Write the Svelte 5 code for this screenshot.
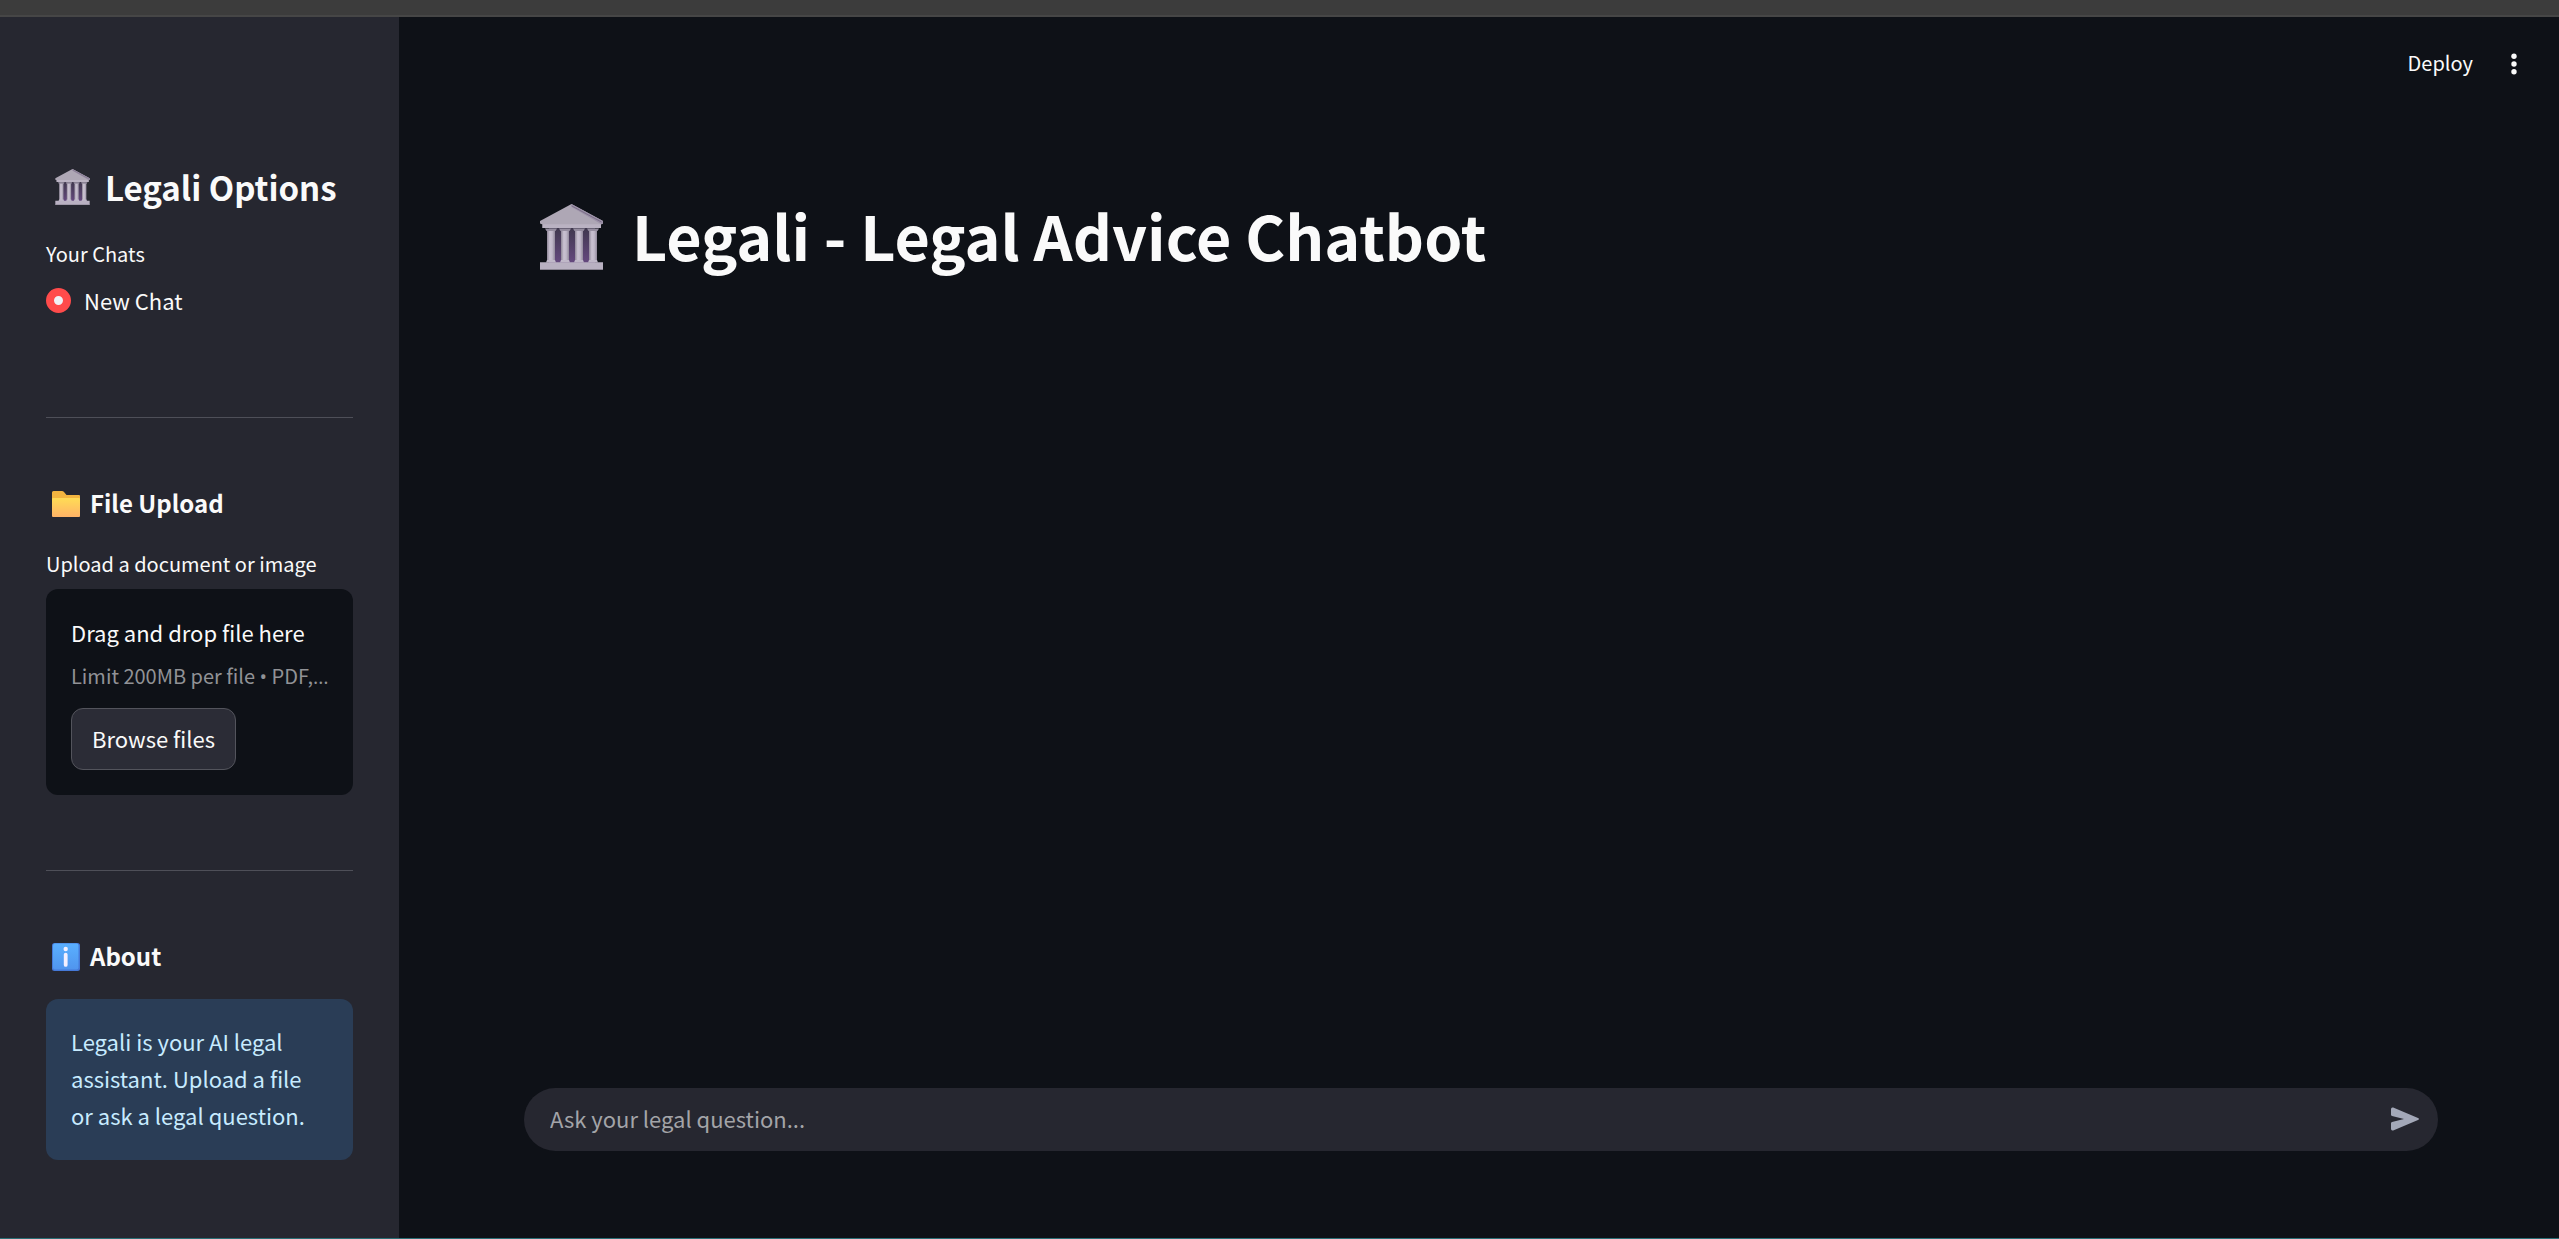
<script>
  let question = $state('');
  let chat = $state('new');
</script>

{#snippet temple(size)}
  <svg class="temple {size}" viewBox="0 0 63 66" aria-hidden="true">
    <defs>
      <linearGradient id="pillar-{size}">
        <stop offset="0" stop-color="#8f8798" />
        <stop offset=".35" stop-color="#c9c1d1" />
        <stop offset=".65" stop-color="#c0b8c9" />
        <stop offset="1" stop-color="#91899b" />
      </linearGradient>
      <linearGradient id="hall-{size}" x1="0" y1="0" x2="0" y2="1">
        <stop offset="0" stop-color="#40384e" />
        <stop offset="1" stop-color="#65497f" />
      </linearGradient>
    </defs>
    <rect x="9" y="24" width="46" height="35" fill="url(#hall-{size})" />
    {#each [7, 21, 35, 49] as x}
      <rect {x} y="25" width="8" height="33" fill="url(#pillar-{size})" />
      <path d="M{x - 2} 24.500h12l-1.500 2.500h-9z" fill="#958d9f" />
      <path d="M{x - 1} 58.500l1-2.500h8l1 2.500z" fill="#c0b8c9" />
    {/each}
    <path d="M31.500 0L63 17v2.500l-2 1V24H2.500v-3.500L0 19.500V17z" fill="#aea7b5" />
    <path d="M31.500 0L63 17v2.500l-2 .5L31.500 3z" fill="#9c91a8" />
    <path d="M31.500 1.800L61.500 18" stroke="#7b6f88" stroke-width="1" fill="none" />
    <path d="M2.500 20.200H61V24H2.500z" fill="#bab2c2" />
    <path d="M0 58.300h63V66H0z" fill="#b9b1c2" />
    <path d="M0 65h63v1H0z" fill="#8a8492" />
  </svg>
{/snippet}

<div class="page">
  <div class="window-edge"></div>
  <div class="layout">
    <aside>
      <h2>{@render temple('small')}Legali Options</h2>

      <fieldset>
        <legend>Your Chats</legend>
        <label class="choice">
          <input type="radio" name="chat" value="new" bind:group={chat} />
          <span>New Chat</span>
        </label>
      </fieldset>

      <hr />

      <h3>
        <svg class="mark" viewBox="0 0 28 28" aria-hidden="true">
          <defs>
            <linearGradient id="folder" x1="0" y1="0" x2="0" y2="1">
              <stop offset="0" stop-color="#ffdc55" />
              <stop offset="1" stop-color="#ffb367" />
            </linearGradient>
          </defs>
          <path d="M0 2.500Q0 1 1.500 1H10q1 0 1.800.800L14.500 5H27q1 0 1 1v6H0z" fill="#f3b540" />
          <path d="M1 8h26q1 0 1 1v17q0 1-1 1H1q-1 0-1-1V9q0-1 1-1z" fill="url(#folder)" />
        </svg>
        File Upload
      </h3>

      <label class="caption" for="picker">Upload a document or image</label>
      <section class="dropzone">
        <p class="prompt">Drag and drop file here</p>
        <p class="limit">Limit 200MB per file <span class="mid">•</span> PDF,<span class="mid">…</span></p>
        <button id="picker" class="browse" type="button">Browse files</button>
      </section>

      <hr />

      <h3>
        <svg class="mark" viewBox="0 0 28 28" aria-hidden="true">
          <defs>
            <linearGradient id="info" x1="0" y1="0" x2="0" y2="1">
              <stop offset="0" stop-color="#5ab0ff" />
              <stop offset="1" stop-color="#5095ee" />
            </linearGradient>
          </defs>
          <rect width="28" height="28" rx="2.500" fill="#4579d8" />
          <rect x="1" y=".5" width="25.500" height="26" rx="2" fill="url(#info)" />
          <circle cx="13.700" cy="6" r="2.200" fill="#f4f0ff" />
          <rect x="11.800" y="9.800" width="3.800" height="14" rx="1.900" fill="#f4f0ff" />
        </svg>
        About
      </h3>
      <p class="note">Legali is your AI legal assistant. Upload a file or ask a legal question.</p>
    </aside>

    <main>
      <header>
        <button class="deploy" type="button">Deploy</button>
        <button class="menu" type="button" aria-label="Main menu">
          <svg viewBox="0 0 24 24" aria-hidden="true">
            <circle cx="12" cy="4.200" r="2.700" />
            <circle cx="12" cy="12" r="2.700" />
            <circle cx="12" cy="19.800" r="2.700" />
          </svg>
        </button>
      </header>

      <h1>{@render temple('large')}Legali - Legal Advice Chatbot</h1>

      <form class="ask" onsubmit={(e) => e.preventDefault()}>
        <input
          type="text"
          aria-label="Ask your legal question"
          placeholder="Ask your legal question..."
          bind:value={question}
        />
        <button type="submit" aria-label="Send message">
          <svg viewBox="0 0 28 24" aria-hidden="true">
            <path d="M0 2.200Q0 0 2.200.6L27 10.900Q29 12 27 13.100L2.200 23.400Q0 24 0 21.800V16.200Q0 15.200 1 15L13 12L1 9Q0 8.800 0 7.800z" />
          </svg>
        </button>
      </form>
    </main>
  </div>
</div>

<style>
  :global(body) {
    margin: 0;
    background: #0e1117;
  }

  .page {
    display: flex;
    flex-direction: column;
    min-height: 100vh;
    box-sizing: border-box;
    border-bottom: 1px solid #2a6f76;
    color: #fafafa;
    font-family: 'Noto Sans CJK SC', 'Source Sans Pro', sans-serif;
    font-size: 22px;
    line-height: 37px;
  }

  .window-edge {
    height: 15px;
    background: #3c3c3c;
    border-bottom: 2px solid #464646;
  }

  .layout {
    display: flex;
    flex: 1;
  }

  aside {
    flex: none;
    width: 399px;
    box-sizing: border-box;
    padding: 146px 46px 0;
    background: #262730;
  }

  h1,
  h2,
  h3,
  p {
    margin: 0;
  }

  h1,
  h2,
  h3 {
    display: flex;
    align-items: center;
    font-weight: 700;
    white-space: nowrap;
  }

  h2 {
    gap: 15px;
    padding-left: 9px;
    font-size: 33px;
    line-height: 48px;
  }

  h3 {
    gap: 10px;
    padding: 0 0 2px 6px;
    font-size: 24px;
    line-height: 34px;
  }

  .temple {
    flex: none;
  }

  .small {
    width: 35px;
    height: 36px;
  }

  .large {
    width: 63px;
    height: 66px;
    margin-top: 4px;
  }

  .mark {
    flex: none;
    width: 28px;
    height: 28px;
    margin-top: 2px;
  }

  fieldset {
    margin: 26px 0 0;
    padding: 0;
    border: 0;
  }

  legend,
  .caption {
    display: block;
    padding: 0;
    font-size: 20px;
    line-height: 34px;
  }

  .choice {
    display: flex;
    align-items: center;
    gap: 13px;
    margin-top: 11px;
  }

  .choice input {
    appearance: none;
    width: 25px;
    height: 25px;
    margin: 0;
    border: 8px solid #ff4b4b;
    border-radius: 50%;
    background: #f0f2f6;
  }

  hr {
    height: 1px;
    margin: 98px 0 68px;
    border: 0;
    background: #4e4f58;
  }

  .caption {
    margin: 25px 0 8px;
  }

  .dropzone {
    padding: 25px;
    border-radius: 12px;
    background: #0e1117;
  }

  .dropzone + hr {
    margin-top: 75px;
  }

  .limit {
    margin: 6px 0 14px;
    color: #919296;
    font-size: 20px;
    white-space: nowrap;
  }

  .mid {
    font-family: 'Open Sans', sans-serif;
    line-height: 1;
  }

  .browse {
    display: block;
    padding: 11px 20px 12px;
    border: 1px solid #53545c;
    border-radius: 12px;
    background: #2b2c36;
    color: inherit;
    font: inherit;
  }

  .note {
    margin-top: 24px;
    padding: 24px 25px 26px;
    border-radius: 12px;
    background: #2a3d56;
    color: #c7ebff;
  }

  main {
    display: flex;
    flex: 1;
    flex-direction: column;
    min-width: 0;
    padding: 0 121px 87px 125px;
  }

  header {
    display: flex;
    align-items: center;
    justify-content: flex-end;
    gap: 29px;
    height: 93px;
    margin-right: -88px;
  }

  header button {
    padding: 0;
    border: 0;
    background: none;
    color: inherit;
    font: inherit;
    font-size: 20px;
  }

  .menu svg {
    display: block;
    width: 24px;
    height: 24px;
    fill: currentColor;
  }

  .deploy {
    margin-bottom: 2px;
  }

  h1 {
    gap: 29px;
    margin-top: 81px;
    padding-left: 16px;
    font-size: 61px;
    line-height: 88px;
  }

  .ask {
    display: flex;
    align-items: center;
    margin-top: auto;
    padding: 12px 19px 14px 26px;
    border-radius: 32px;
    background: #262730;
  }

  .ask input {
    flex: 1;
    min-width: 0;
    height: 37px;
    padding: 0;
    border: 0;
    outline: 0;
    background: none;
    color: inherit;
    font: inherit;
  }

  .ask input::placeholder {
    color: #a3a4a8;
    opacity: 1;
  }

  .ask button {
    padding: 0;
    border: 0;
    background: none;
  }

  .ask button svg {
    display: block;
    width: 28px;
    height: 24px;
    fill: #a3a8b8;
  }
</style>
